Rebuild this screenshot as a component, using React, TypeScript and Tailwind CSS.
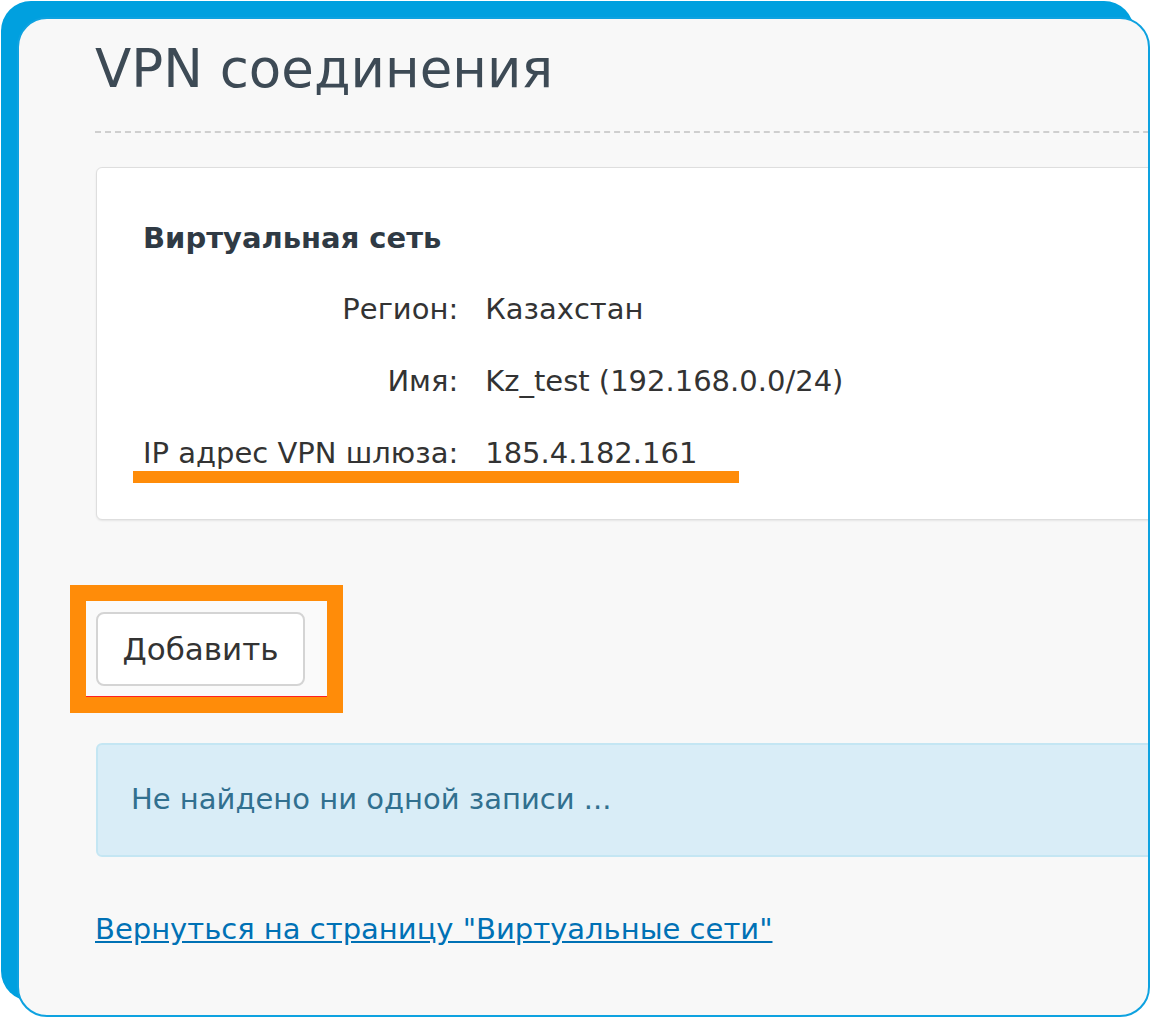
import React from 'react';

const rows = [
  { label: 'Регион:', value: 'Казахстан' },
  { label: 'Имя:', value: 'Kz_test (192.168.0.0/24)' },
  { label: 'IP адрес VPN шлюза:', value: '185.4.182.161', marked: true },
];

export default function App() {
  return (
    <div className="w-[1150px] h-[1017px] bg-white pt-[17px] pl-[17px] font-['DejaVu_Sans',Verdana,sans-serif]">
      <div className="w-[1133px] h-[1000px] rounded-[30px] border-2 border-[#0ea2e0] bg-[#f8f8f8] shadow-[-16px_-16px_0_0_#00a0df] overflow-hidden">
        <div className="w-[1200px] pl-[76px] pt-[10px]">
          <h1 className="text-[53px] leading-[80px] text-[#3d4a55] font-normal">VPN соединения</h1>
          <div className="mt-[22px] border-t-2 border-dashed border-[#cfcfcf]" />

          <div className="mt-[34px] ml-[1px] h-[353px] rounded-[6px] border border-[#dedede] bg-white shadow-[0_1px_2px_rgba(0,0,0,0.08)] pl-[46px] pt-[50px]">
            <h3 className="text-[29px] leading-[40px] font-bold text-[#2f3a44]">Виртуальная сеть</h3>
            <div className="mt-[31px] grid grid-cols-[auto_1fr] gap-y-[32px] text-[29px] leading-[40px] text-[#333]">
              {rows.map((r) => (
                <React.Fragment key={r.label}>
                  <div className="relative text-right">
                    {r.label}
                    {r.marked && (
                      <span className="absolute left-[-10px] top-[38px] h-[12px] w-[606px] bg-[#ff8c09]" />
                    )}
                  </div>
                  <div className="pl-[27px]">{r.value}</div>
                </React.Fragment>
              ))}
            </div>
          </div>

          <div className="mt-[65px] -ml-[25px] w-[273px] border-[16px] border-[#ff8c09]">
            <div className="bg-[#fafafa] border-b border-[#ff2020] pl-[10px] pt-[11px] pb-[10px]">
              <button className="w-[209px] h-[74px] rounded-[8px] border-2 border-[#d4d4d4] bg-white text-[31px] text-[#333]">
                Добавить
              </button>
            </div>
          </div>

          <div className="mt-[30px] ml-[1px] h-[114px] flex items-center rounded-[6px] border-2 border-[#c4e6f3] bg-[#d9edf7] pl-[33px] text-[29px] text-[#31708f]">
            Не найдено ни одной записи ...
          </div>

          <a href="#" className="mt-[52px] inline-block text-[29px] leading-[40px] text-[#0071b5] underline">
            Вернуться на страницу "Виртуальные сети"
          </a>
        </div>
      </div>
    </div>
  );
}
